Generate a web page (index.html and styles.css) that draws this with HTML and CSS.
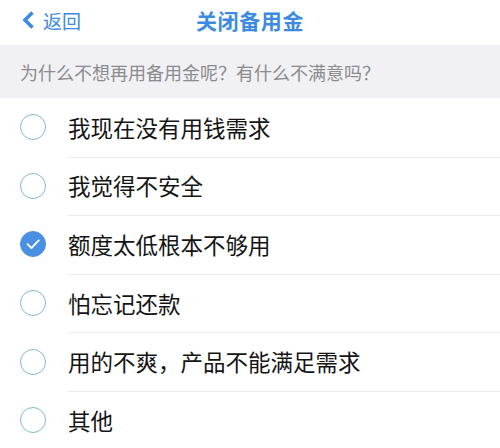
FILE: index.html
```html
<!DOCTYPE html>
<html lang="zh-CN">
<head>
<meta charset="utf-8">
<link rel="stylesheet" href="styles.css">
</head>
<body>
<header class="nav">
  <a class="back">
    <svg class="chev" width="13" height="18" viewBox="0 0 13 18"><path d="M10.5 1.5 L3 9 L10.5 16.5" fill="none" stroke="#3d8be0" stroke-width="3.6" stroke-linejoin="miter"/></svg>
    <span>返回</span>
  </a>
  <h1 class="title">关闭备用金</h1>
</header>
<div class="prompt">为什么不想再用备用金呢？有什么不满意吗？</div>
<ul class="list">
  <li class="item"><span class="radio"></span><span class="label">我现在没有用钱需求</span></li>
  <li class="item"><span class="radio"></span><span class="label">我觉得不安全</span></li>
  <li class="item"><span class="radio on"><svg width="26" height="26" viewBox="0 0 26 26"><path d="M7.5 13.2 L11.4 17 L18.8 9.4" fill="none" stroke="#fff" stroke-width="1.8" stroke-linecap="round" stroke-linejoin="round"/></svg></span><span class="label">额度太低根本不够用</span></li>
  <li class="item"><span class="radio"></span><span class="label">怕忘记还款</span></li>
  <li class="item"><span class="radio"></span><span class="label">用的不爽，产品不能满足需求</span></li>
  <li class="item"><span class="radio"></span><span class="label">其他</span></li>
</ul>
</body>
</html>
```
FILE: styles.css
```css
* { box-sizing: border-box; }
html, body { margin: 0; padding: 0; background: #fff; }
body {
  width: 500px;
  font-family: "Noto Sans CJK SC", "Noto Sans", sans-serif;
  overflow: hidden;
}
.nav {
  height: 45px;
  position: relative;
  display: flex;
  align-items: center;
  justify-content: center;
}
.back {
  position: absolute;
  left: 22px;
  top: 0;
  height: 40px;
  display: flex;
  align-items: center;
  gap: 8px;
  color: #3d8be0;
  font-size: 19px;
}
.title {
  margin: 0 0 6px;
  font-size: 21px;
  font-weight: 700;
  color: #3d8be0;
  letter-spacing: 0.6px;
}
.prompt {
  height: 53px;
  background: #f1f1f5;
  color: #8b8b8f;
  font-size: 18px;
  padding-left: 20px;
  display: flex;
  align-items: center;
}
.list { list-style: none; margin: 0; padding: 0; }
.item {
  height: 58.6px;
  display: flex;
  align-items: center;
  position: relative;
}
.item + .item::before {
  content: "";
  position: absolute;
  top: 0;
  left: 67px;
  right: 0;
  border-top: 1px solid #ececef;
}
.radio {
  width: 26px;
  height: 26px;
  margin-left: 20px;
  margin-right: 22px;
  border-radius: 50%;
  border: 1.6px solid #80b8da;
  flex: none;
  display: flex;
  align-items: center;
  justify-content: center;
}
.radio.on {
  background: #4a90e2;
  border-color: #4a90e2;
}
.radio.on svg { flex: none; }
.label {
  font-size: 22.5px;
  color: #141414;
  margin-top: -1px;
}
```
